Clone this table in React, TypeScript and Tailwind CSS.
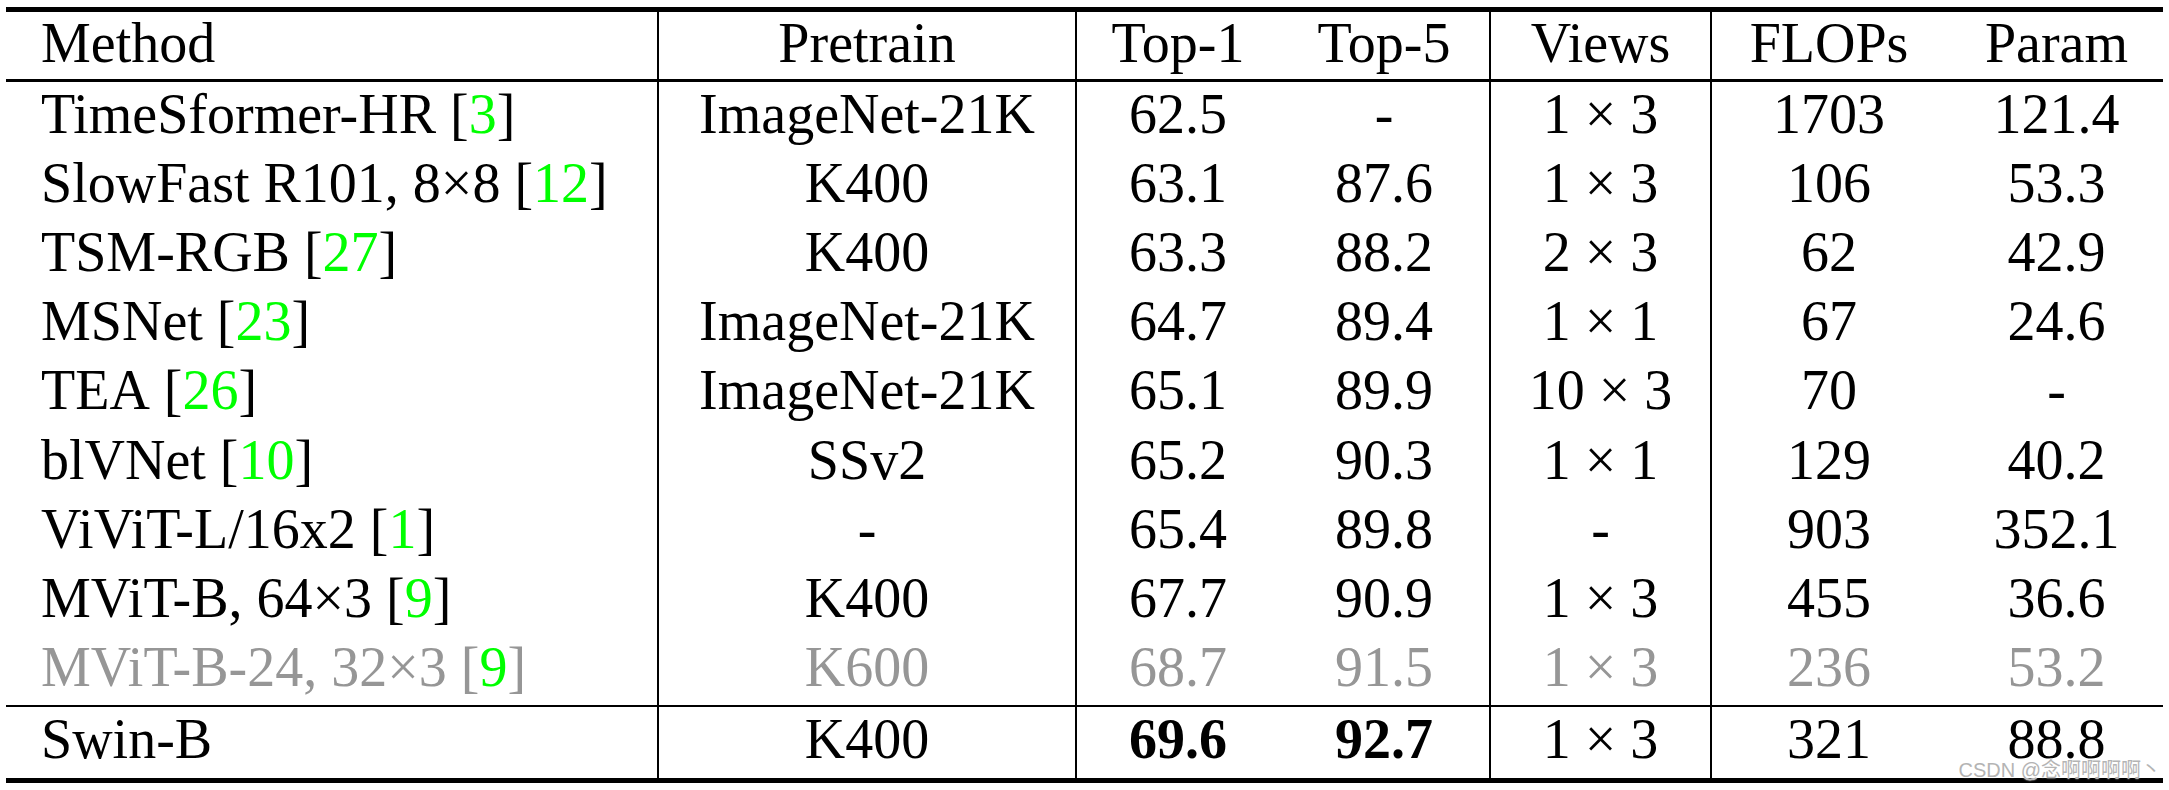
import React from 'react'

type Row = {
  method: string
  cite?: string
  pretrain: string
  top1: string
  top5: string
  views: string
  flops: string
  param: string
  muted?: boolean
}

const rows: Row[] = [
  { method: 'TimeSformer-HR', cite: '3', pretrain: 'ImageNet-21K', top1: '62.5', top5: '-', views: '1 × 3', flops: '1703', param: '121.4' },
  { method: 'SlowFast R101, 8×8', cite: '12', pretrain: 'K400', top1: '63.1', top5: '87.6', views: '1 × 3', flops: '106', param: '53.3' },
  { method: 'TSM-RGB', cite: '27', pretrain: 'K400', top1: '63.3', top5: '88.2', views: '2 × 3', flops: '62', param: '42.9' },
  { method: 'MSNet', cite: '23', pretrain: 'ImageNet-21K', top1: '64.7', top5: '89.4', views: '1 × 1', flops: '67', param: '24.6' },
  { method: 'TEA', cite: '26', pretrain: 'ImageNet-21K', top1: '65.1', top5: '89.9', views: '10 × 3', flops: '70', param: '-' },
  { method: 'blVNet', cite: '10', pretrain: 'SSv2', top1: '65.2', top5: '90.3', views: '1 × 1', flops: '129', param: '40.2' },
  { method: 'ViViT-L/16x2', cite: '1', pretrain: '-', top1: '65.4', top5: '89.8', views: '-', flops: '903', param: '352.1' },
  { method: 'MViT-B, 64×3', cite: '9', pretrain: 'K400', top1: '67.7', top5: '90.9', views: '1 × 3', flops: '455', param: '36.6' },
  { method: 'MViT-B-24, 32×3', cite: '9', pretrain: 'K600', top1: '68.7', top5: '91.5', views: '1 × 3', flops: '236', param: '53.2', muted: true },
]

const grid = 'grid grid-cols-[653px_418px_202px_212px_221px_234px_1fr]'

function Cells({ r, bold }: { r: Row; bold?: boolean }) {
  const num = bold ? 'font-bold' : ''
  return (
    <>
      <div className="flex items-center border-r-2 border-black pl-[35px] pb-[6px] whitespace-nowrap">
        {r.method}
        {r.cite && (
          <>
            &nbsp;[<span className="text-[#00ff00]">{r.cite}</span>]
          </>
        )}
      </div>
      <div className="flex items-center justify-center border-r-2 border-black pb-[6px]">{r.pretrain}</div>
      <div className={`flex items-center justify-center pb-[6px] ${num}`}>{r.top1}</div>
      <div className={`flex items-center justify-center border-r-2 border-black pb-[6px] ${num}`}>{r.top5}</div>
      <div className="flex items-center justify-center border-r-2 border-black pb-[6px]">{r.views}</div>
      <div className="flex items-center justify-center pb-[6px]">{r.flops}</div>
      <div className="flex items-center justify-center pb-[6px] pl-[4px]">{r.param}</div>
    </>
  )
}

export default function App() {
  return (
    <div className="w-[2169px] h-[790px] bg-white pt-[7px] px-[6px] relative overflow-hidden">
      <div
        className="border-t-[5px] border-b-[5px] border-black text-black text-[56px] leading-none"
        style={{ fontFamily: '"Liberation Serif", "Times New Roman", serif' }}
      >
        <div className={`${grid} h-[70px] border-b-[3px] border-black`}>
          <div className="flex items-center border-r-2 border-black pl-[35px] pb-[6px]">Method</div>
          <div className="flex items-center justify-center border-r-2 border-black pb-[6px]">Pretrain</div>
          <div className="flex items-center justify-center pb-[6px]">Top-1</div>
          <div className="flex items-center justify-center border-r-2 border-black pb-[6px]">Top-5</div>
          <div className="flex items-center justify-center border-r-2 border-black pb-[6px]">Views</div>
          <div className="flex items-center justify-center pb-[6px]">FLOPs</div>
          <div className="flex items-center justify-center pb-[6px] pl-[4px]">Param</div>
        </div>

        {rows.map((r) => (
          <div key={r.method} className={`${grid} h-[69.2px] ${r.muted ? 'text-[#969696]' : ''}`}>
            <Cells r={r} />
          </div>
        ))}

        <div className={`${grid} h-[73px] border-t-2 border-black`}>
          <Cells
            r={{ method: 'Swin-B', pretrain: 'K400', top1: '69.6', top5: '92.7', views: '1 × 3', flops: '321', param: '88.8' }}
            bold
          />
        </div>
      </div>

      <div
        className="absolute right-[8px] bottom-[10px] text-[20px] leading-none text-[#b4b4b4] [text-shadow:0_0_2px_#fff,0_0_1px_#fff]"
        style={{ fontFamily: '"Liberation Sans", "Noto Sans CJK SC", sans-serif' }}
      >
        CSDN @念啊啊啊啊丶
      </div>
    </div>
  )
}
